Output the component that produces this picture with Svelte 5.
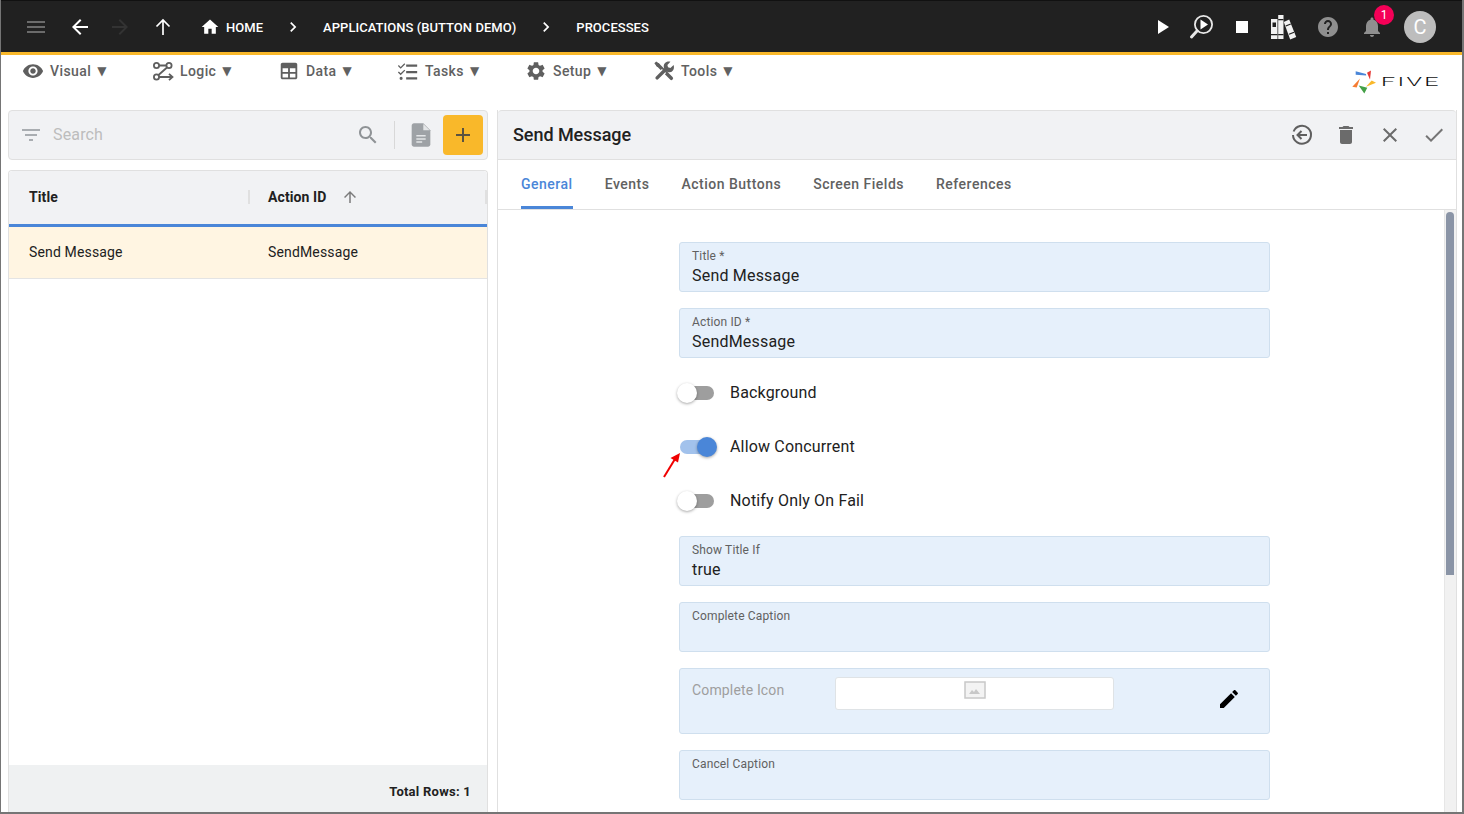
<script>
	const icons = {
		menu: "M3 18h18v-2H3v2zm0-5h18v-2H3v2zm0-7v2h18V6H3z",
		back: "M20 11H7.83l5.59-5.59L12 4l-8 8 8 8 1.41-1.41L7.83 13H20v-2z",
		forward: "M12 4l-1.41 1.41L16.17 11H4v2h12.17l-5.58 5.59L12 20l8-8z",
		up: "M4 12l1.41 1.41L11 7.83V20h2V7.83l5.58 5.59L20 12l-8-8-8 8z",
		home: "M10 20v-6h4v6h5v-8h3L12 3 2 12h3v8z",
		chevron: "M10 6L8.59 7.41 13.17 12l-4.58 4.58L10 18l6-6z",
		play: "M8 5v14l11-7z",
		stop: "M6 6h12v12H6z",
		help: "M12 2C6.48 2 2 6.48 2 12s4.48 10 10 10 10-4.48 10-10S17.52 2 12 2zm1 17h-2v-2h2v2zm2.07-7.75l-.9.92C13.45 12.9 13 13.5 13 15h-2v-.5c0-1.1.45-2.1 1.17-2.83l1.24-1.26c.37-.36.59-.86.59-1.41 0-1.1-.9-2-2-2s-2 .9-2 2H8c0-2.21 1.79-4 4-4s4 1.79 4 4c0 .88-.36 1.68-.93 2.25z",
		bell: "M12 22c1.1 0 2-.9 2-2h-4c0 1.1.89 2 2 2zm6-6v-5c0-3.07-1.64-5.64-4.5-6.32V4c0-.83-.67-1.5-1.5-1.5s-1.5.67-1.5 1.5v.68C7.63 5.36 6 7.92 6 11v5l-2 2v1h16v-1l-2-2z",
		eye: "M12 4.5C7 4.5 2.73 7.61 1 12c1.73 4.39 6 7.5 11 7.5s9.27-3.11 11-7.5c-1.73-4.39-6-7.5-11-7.5zM12 17c-2.76 0-5-2.24-5-5s2.24-5 5-5 5 2.24 5 5-2.24 5-5 5zm0-8c-1.66 0-3 1.34-3 3s1.34 3 3 3 3-1.34 3-3-1.34-3-3-3z",
		table: "M5 3h14c1.1 0 2 .9 2 2v14c0 1.1-.9 2-2 2H5c-1.1 0-2-.9-2-2V5c0-1.1.9-2 2-2zm0 6v4h6V9H5zm8 0v4h6V9h-6zm-8 6v4h6v-4H5zm8 0v4h6v-4h-6z",
		tasks: "M10 5h12v2.400H10zm0 7h12v2.400H10zm0 6.800h12v2.400H10zM2 5.500l2 2 4-4 1 1-5 5-3-3zm0 7l2 2 4-4 1 1-5 5-3-3zM4.500 18.300a1.700 1.700 0 1 1 0 3.400 1.700 1.700 0 0 1 0-3.400z",
		gear: "M19.14 12.94c.04-.3.06-.61.06-.94 0-.32-.02-.64-.07-.94l2.03-1.58c.18-.14.23-.41.12-.61l-1.92-3.32c-.12-.22-.37-.29-.59-.22l-2.39.96c-.5-.38-1.03-.7-1.62-.94l-.36-2.54c-.04-.24-.24-.41-.48-.41h-3.84c-.24 0-.43.17-.47.41l-.36 2.54c-.59.24-1.13.57-1.62.94l-2.39-.96c-.22-.08-.47 0-.59.22L2.74 8.87c-.12.21-.08.47.12.61l2.03 1.58c-.05.3-.09.63-.09.94s.02.64.07.94l-2.03 1.58c-.18.14-.23.41-.12.61l1.92 3.32c.12.22.37.29.59.22l2.39-.96c.5.38 1.03.7 1.62.94l.36 2.54c.05.24.24.41.48.41h3.84c.24 0 .44-.17.47-.41l.36-2.54c.59-.24 1.13-.56 1.62-.94l2.39.96c.22.08.47 0 .59-.22l1.92-3.32c.12-.22.07-.47-.12-.61l-2.01-1.58zM12 15.6c-1.98 0-3.6-1.62-3.6-3.6s1.62-3.6 3.6-3.6 3.6 1.62 3.6 3.6-1.62 3.6-3.6 3.6z",
		search: "M15.5 14h-.79l-.28-.27C15.41 12.59 16 11.11 16 9.5 16 5.91 13.09 3 9.5 3S3 5.91 3 9.5 5.91 16 9.5 16c1.61 0 3.09-.59 4.23-1.57l.27.28v.79l5 4.99L20.49 19l-4.99-5zm-6 0C7.01 14 5 11.99 5 9.5S7.01 5 9.5 5 14 7.01 14 9.5 11.99 14 9.5 14z",
		filter: "M10 18h4v-2h-4v2zM3 6v2h18V6H3zm3 7h12v-2H6v2z",
		add: "M19 13h-6v6h-2v-6H5v-2h6V5h2v6h6v2z",
		trash: "M6 19c0 1.1.9 2 2 2h8c1.1 0 2-.9 2-2V7H6v12zM19 4h-3.5l-1-1h-5l-1 1H5v2h14V4z",
		close: "M19 6.41L17.59 5 12 10.59 6.41 5 5 6.41 10.59 12 5 17.59 6.41 19 12 13.41 17.59 19 19 17.59 13.41 12z",
		check: "M9 16.17L4.83 12l-1.42 1.41L9 19 21 7l-1.41-1.41z",
		edit: "M3 17.25V21h3.75L17.81 9.94l-3.75-3.75L3 17.25zM20.71 7.04c.39-.39.39-1.02 0-1.41l-2.34-2.34c-.39-.39-1.02-.39-1.41 0l-1.83 1.83 3.75 3.75 1.83-1.83z"
	};

	const menus = [
		{ label: "Visual", icon: "eye" },
		{ label: "Logic", icon: "logic" },
		{ label: "Data", icon: "table" },
		{ label: "Tasks", icon: "tasks" },
		{ label: "Setup", icon: "gear" },
		{ label: "Tools", icon: "tools" }
	];

	const tabs = ["General", "Events", "Action Buttons", "Screen Fields", "References"];
</script>

{#snippet icon(name, size, color)}
	<svg width={size} height={size} viewBox="0 0 24 24" fill={color} aria-hidden="true"><path d={icons[name]} /></svg>
{/snippet}

{#snippet toggle(on)}
	<span class="toggle" class:on><span class="track"></span><span class="thumb"></span></span>
{/snippet}

<div class="frame">
	<header class="topbar">
		<button class="nav first">{@render icon("menu", 24, "#6b6b6b")}</button>
		<button class="nav gap4">{@render icon("back", 24, "#fff")}</button>
		<button class="nav">{@render icon("forward", 24, "#333")}</button>
		<button class="nav gap3">
			<svg width="24" height="24" viewBox="0 0 24 24" fill="none" stroke="#fff" stroke-width="1.700">
				<path d="M12 20V5M5.500 11.500L12 5l6.500 6.500" />
			</svg>
		</button>
		<span class="crumb home">{@render icon("home", 20, "#fff")}<span>HOME</span></span>
		<span class="sep">{@render icon("chevron", 20, "#fff")}</span>
		<span class="crumb">APPLICATIONS (BUTTON DEMO)</span>
		<span class="sep">{@render icon("chevron", 20, "#fff")}</span>
		<span class="crumb">PROCESSES</span>

		<div class="actions">
			<span class="act a-play">{@render icon("play", 24, "#fff")}</span>
			<span class="act a-run">
				<svg width="28" height="28" viewBox="0 0 28 28" fill="none">
					<circle cx="15.500" cy="11.500" r="8.600" stroke="#e8e8e8" stroke-width="1.800" />
					<path d="M12.500 6.500v10l7.500-5z" fill="#fff" />
					<path d="M9.200 17.800L3.500 24" stroke="#e8e8e8" stroke-width="3" stroke-linecap="round" />
				</svg>
			</span>
			<span class="act a-stop">{@render icon("stop", 24, "#fff")}</span>
			<span class="act a-books">
				<svg width="27" height="26" viewBox="0 0 27 26" fill="#f2f2f2">
					<path d="M1 5h6.500v20H1z" />
					<path d="M8.200 1h5.300v24H8.200z" />
					<path d="M13.800 8l5.400-2.500 7 17.500-6 2.500z" />
					<path d="M2.500 8.500h3.500v4.500H2.500zM1 20h6.500v1.200H1zM8.200 5h5.300v1.200H8.200zM8.200 20h5.300v1.200H8.200z" fill="#212121" />
					<path d="M15.500 11.500l5-2 .5 1.100-5 2zM18.800 19.700l5-2 .5 1.100-5 2z" fill="#212121" />
				</svg>
			</span>
			<span class="act a-help">{@render icon("help", 24, "#8f8f8f")}</span>
			<span class="act a-bell">{@render icon("bell", 24, "#8f8f8f")}<span class="badge">1</span></span>
			<span class="avatar">C</span>
		</div>
	</header>

	<nav class="toolbar">
		{#each menus as m}
			<span class="menu">
				{#if m.icon === "logic"}
					<svg width="22" height="22" viewBox="0 0 22 22" fill="none" stroke="#5f5f5f" stroke-width="1.800">
						<circle cx="4.500" cy="5.500" r="2.600" />
						<circle cx="17" cy="5.500" r="2.600" />
						<circle cx="4.500" cy="17" r="2.600" />
						<path d="M7 5.500h7.500M15 7.500L6.500 15M7 17h13.500M17 13.800l3.500 3.200-3.500 3.200" />
					</svg>
				{:else if m.icon === "tools"}
					<svg width="22" height="22" viewBox="0 0 24 24" fill="none">
						<path d="M5 5l15 15" stroke="#5f5f5f" stroke-width="3.800" stroke-linecap="round" />
						<path d="M1.500 3.500l2-2 4 3-.5 2.500-2.500.5z" fill="#5f5f5f" />
						<path d="M9 15l3-3" stroke="#fff" stroke-width="6.500" />
						<path d="M4.500 19.500L14 10" stroke="#5f5f5f" stroke-width="3.800" stroke-linecap="round" />
						<path d="M22.500 5.500l-3.500 3.200-2.600-.7-.7-2.600 3.300-3.500c-3.400-1-7.300 1.200-7.300 5 0 1.400.5 2.600 1.200 3.400l2.900 2.900c3.800 1.300 8.300-1.800 6.700-7.700z" fill="#5f5f5f" />
					</svg>
				{:else}
					{@render icon(m.icon, 22, "#5f5f5f")}
				{/if}
				<span class="menu-label">{m.label}</span>
				<span class="caret">▼</span>
			</span>
		{/each}
		<div class="logo">
			<svg width="24" height="24" viewBox="0 0 24 24">
				<path d="M3.700 1.200L14 4l.2 1.500-10.500-.7z" fill="#4a86d8" />
				<path d="M19 .5L15 2.800l3 6.700z" fill="#e53935" />
				<path d="M24 12.800l-4.300-2.300-5.700 6.300z" fill="#f9b82a" />
				<path d="M6.700 15.500l8.600 2.300-3 5.700z" fill="#43a047" />
				<path d="M8 8.500L.3 16.800l4.400.7z" fill="#f57c32" />
			</svg>
			<span class="logo-text">FIVE</span>
		</div>
	</nav>

	<main class="content">
		<section class="left">
			<div class="searchbar">
				<span class="filter">{@render icon("filter", 24, "#a9adb1")}</span>
				<span class="placeholder">Search</span>
				<span class="mag">{@render icon("search", 24, "#8f9396")}</span>
				<span class="divider"></span>
				<span class="doc">
					<svg width="28" height="28" viewBox="0 0 24 24">
						<path d="M6 2h8l6 6v12c0 1.100-.9 2-2 2H6c-1.100 0-2-.9-2-2V4c0-1.100.9-2 2-2z" fill="#9ea2a6" />
						<path d="M14 2.500V8h5.500z" fill="#e4e6e8" />
						<path d="M8 12h8v1.300H8zM8 14.700h8V16H8zM8 17.400h5v1.300H8z" fill="#e4e6e8" />
					</svg>
				</span>
				<button class="addbtn">{@render icon("add", 24, "#5b5340")}</button>
			</div>

			<div class="grid">
				<div class="grid-head">
					<div class="col">Title</div>
					<div class="col second">Action ID {@render icon("up", 18, "#7b7b7b")}</div>
				</div>
				<div class="grid-row">
					<div class="col">Send Message</div>
					<div class="col">SendMessage</div>
				</div>
				<div class="grid-space"></div>
				<div class="grid-foot">Total Rows: 1</div>
			</div>
		</section>

		<section class="right">
			<div class="formhead">
				<h1>Send Message</h1>
				<div class="formtools">
					<svg width="24" height="24" viewBox="0 0 24 24" fill="none" stroke="#5f5f5f" stroke-width="2">
						<path d="M3.600 8.500A9 9 0 1 1 3 12" />
						<path d="M17 12H8M11.500 8L7.500 12l4 4" />
					</svg>
					{@render icon("trash", 24, "#6b6b6b")}
					{@render icon("close", 24, "#6b6b6b")}
					{@render icon("check", 24, "#757575")}
				</div>
			</div>

			<div class="tabs">
				{#each tabs as t, i}
					<span class="tab" class:active={i === 0}>{t}</span>
				{/each}
			</div>

			<div class="formbody">
				<div class="scroller">
					<div class="form">
						<div class="field"><label>Title *</label><div class="val">Send Message</div></div>
						<div class="field"><label>Action ID *</label><div class="val">SendMessage</div></div>

						<div class="switch first-switch">{@render toggle(false)}<span class="switch-label">Background</span></div>
						<div class="switch">
							{@render toggle(true)}<span class="switch-label">Allow Concurrent</span>
							<svg class="arrow" width="20" height="28" viewBox="0 0 20 28">
								<path d="M2 26L13 8" stroke="#f00000" stroke-width="2" />
								<path d="M18 2l-9.500 5 7.500 4.500z" fill="#f00000" />
							</svg>
						</div>
						<div class="switch last-switch">{@render toggle(false)}<span class="switch-label">Notify Only On Fail</span></div>

						<div class="field"><label>Show Title If</label><div class="val">true</div></div>
						<div class="field"><label>Complete Caption</label><div class="val"></div></div>

						<div class="field iconfield">
							<span class="iconlabel">Complete Icon</span>
							<div class="iconbox">
								<svg width="22" height="18" viewBox="0 0 22 18">
									<rect x="1" y="1" width="20" height="16" fill="#f3f3f3" stroke="#c8c8c8" stroke-width="1.500" />
									<path d="M5 13l3-4 2 2 2-3 4 5z" fill="#c8c8c8" />
								</svg>
							</div>
							<span class="pencil">{@render icon("edit", 24, "#000")}</span>
						</div>

						<div class="field"><label>Cancel Caption</label><div class="val"></div></div>
					</div>
				</div>
				<div class="scrolltrack"><div class="scrollthumb"></div></div>
			</div>
		</section>
	</main>
</div>

<style>
	:global(body) {
		margin: 0;
		background: #fff;
	}
	.frame {
		width: 1464px;
		height: 814px;
		box-sizing: border-box;
		border-left: 1px solid #757575;
		border-right: 2px solid #757575;
		border-bottom: 2px solid #757575;
		font-family: Roboto, "Liberation Sans", sans-serif;
		display: flex;
		flex-direction: column;
		overflow: hidden;
		color: #212121;
	}
	svg {
		display: block;
		flex: none;
	}
	button {
		border: 0;
		background: none;
		padding: 0;
		display: flex;
		align-items: center;
		justify-content: center;
	}

	/* top bar */
	.topbar {
		height: 51px;
		margin-left: -1px;
		margin-right: -2px;
		flex: none;
		background: #212121;
		border-top: 1px solid #111;
		border-bottom: 3px solid #f9b82a;
		display: flex;
		align-items: center;
		color: #fff;
	}
	.nav {
		width: 40px;
		height: 40px;
	}
	.nav.first {
		margin-left: 16px;
	}
	.nav.gap4 {
		margin-left: 4px;
	}
	.nav.gap3 {
		margin-left: 3px;
	}
	.crumb {
		font-size: 13px;
		font-weight: 500;
		display: flex;
		align-items: center;
		white-space: nowrap;
		padding-top: 1px;
		letter-spacing: 0.04px;
	}
	.crumb.home {
		margin-left: 17px;
		gap: 6px;
	}
	.sep {
		width: 20px;
		margin: 0 20px;
	}
	.actions {
		margin-left: auto;
		display: flex;
		align-items: center;
		padding-right: 28px;
	}
	.act {
		position: relative;
		display: block;
	}
	.a-play { margin-right: 14px; }
	.a-run { margin-right: 14px; }
	.a-stop { margin-right: 16px; }
	.a-books { margin-right: 19px; }
	.a-help { margin-right: 20px; }
	.a-bell { margin-right: 20px; }
	.badge {
		position: absolute;
		top: -10px;
		left: 14px;
		width: 20px;
		height: 20px;
		border-radius: 50%;
		background: #f50057;
		color: #fff;
		font-size: 12px;
		line-height: 20px;
		text-align: center;
	}
	.avatar {
		width: 32px;
		height: 32px;
		border-radius: 50%;
		background: #bdbdbd;
		color: #fff;
		font-size: 20px;
		line-height: 32px;
		text-align: center;
	}

	/* second row */
	.toolbar {
		height: 55px;
		flex: none;
		display: grid;
		grid-template-columns: 130px 126px 119px 128px 128px auto 1fr;
		align-items: start;
		padding-left: 21px;
	}
	.menu {
		display: flex;
		align-items: center;
		height: 22px;
		margin-top: 5px;
		color: #616161;
		font-size: 14px;
		font-weight: 500;
		letter-spacing: 0.4px;
	}
	.menu-label {
		margin-left: 6px;
	}
	.caret {
		margin-left: 6px;
		font-size: 12px;
		font-family: "DejaVu Sans", sans-serif;
	}
	.logo {
		justify-self: end;
		margin-top: 15px;
		margin-right: 22px;
		display: flex;
		align-items: center;
		gap: 5px;
	}
	.logo-text {
		width: 59px;
		font-size: 12.5px;
		font-weight: 300;
		line-height: 24px;
		letter-spacing: 1.2px;
		color: #111;
		transform: scaleX(2);
		transform-origin: left center;
	}

	.content {
		flex: 1;
		min-height: 0;
		display: flex;
		padding-left: 7px;
	}

	/* left list */
	.left {
		width: 480px;
		flex: none;
		display: flex;
		flex-direction: column;
	}
	.searchbar {
		height: 50px;
		box-sizing: border-box;
		background: #f1f2f4;
		border: 1px solid #e0e0e0;
		border-radius: 4px;
		display: flex;
		align-items: center;
		flex: none;
	}
	.filter {
		margin-left: 10px;
	}
	.placeholder {
		margin-left: 10px;
		padding-bottom: 2px;
		font-size: 16px;
		letter-spacing: 0.15px;
		color: #bdbdbd;
	}
	.mag {
		margin-left: auto;
	}
	.divider {
		width: 1px;
		height: 28px;
		background: #d8d8d8;
		margin: 0 12px 0 14px;
	}
	.doc {
		margin-right: 8px;
	}
	.addbtn {
		width: 40px;
		height: 40px;
		border-radius: 4px;
		background: #f9b82a;
		margin-right: 4px;
	}
	.grid {
		margin-top: 10px;
		flex: 1;
		min-height: 0;
		display: flex;
		flex-direction: column;
		border: 1px solid #e0e0e0;
		border-bottom: 0;
		border-radius: 4px 4px 0 0;
	}
	.grid-head {
		height: 51px;
		padding-bottom: 2px;
		flex: none;
		background: #f1f2f4;
		border-bottom: 3px solid #4a86d8;
		display: flex;
		align-items: center;
		font-size: 14px;
		font-weight: 700;
		letter-spacing: 0.1px;
		border-radius: 4px 4px 0 0;
	}
	.col {
		width: 239px;
		box-sizing: border-box;
		padding-left: 20px;
		white-space: nowrap;
	}
	.grid-head .second {
		display: flex;
		align-items: center;
		gap: 15px;
		border-left: 2px solid #e0e0e0;
		border-right: 2px solid #e0e0e0;
		height: 14px;
		padding-left: 18px;
	}
	.grid-row {
		height: 49px;
		padding-bottom: 2px;
		flex: none;
		background: #fff5e2;
		border-bottom: 1px solid #e4e4e4;
		display: flex;
		align-items: center;
		font-size: 14px;
		letter-spacing: 0.15px;
	}
	.grid-space {
		flex: 1;
	}
	.grid-foot {
		height: 47px;
		flex: none;
		background: #eff1f2;
		font-size: 13px;
		font-weight: 700;
		letter-spacing: 0.25px;
		text-align: right;
		padding-right: 16px;
		line-height: 54px;
	}

	/* right form */
	.right {
		width: 960px;
		flex: none;
		margin-left: 9px;
		display: flex;
		flex-direction: column;
		border-left: 1px solid #e0e0e0;
		border-right: 1px solid #e0e0e0;
		box-sizing: border-box;
	}
	.formhead {
		height: 50px;
		flex: none;
		box-sizing: border-box;
		background: #f1f2f4;
		border: 1px solid #e0e0e0;
		border-left: 0;
		border-right: 0;
		border-radius: 4px 4px 0 0;
		display: flex;
		align-items: center;
		padding: 0 10px 0 15px;
	}
	h1 {
		margin: 0 0 2px;
		font-size: 18px;
		font-weight: 500;
		letter-spacing: -0.05px;
	}
	.formtools {
		margin-left: auto;
		display: flex;
		gap: 20px;
	}
	.tabs {
		height: 50px;
		flex: none;
		box-sizing: border-box;
		border-bottom: 1px solid #e0e0e0;
		display: flex;
		padding-left: 23px;
		gap: 32px;
	}
	.tab {
		font-size: 14px;
		font-weight: 500;
		letter-spacing: 0.5px;
		color: #616161;
		line-height: 48px;
		height: 49px;
		box-sizing: border-box;
	}
	.tab.active {
		color: #4a86d8;
		border-bottom: 3px solid #4a86d8;
	}
	.formbody {
		flex: 1;
		min-height: 0;
		display: flex;
	}
	.scroller {
		flex: 1;
		min-width: 0;
		overflow: hidden;
	}
	.form {
		width: 591px;
		margin: 32px 0 0 181px;
		display: flex;
		flex-direction: column;
	}
	.field {
		height: 50px;
		flex: none;
		box-sizing: border-box;
		background: #e6f0fb;
		border: 1px solid #cfdfee;
		border-radius: 3px;
		padding: 6px 12px 0;
		margin-bottom: 16px;
	}
	label {
		display: block;
		font-size: 12px;
		line-height: 14px;
		letter-spacing: 0.15px;
		color: #616161;
	}
	.val {
		font-size: 16px;
		line-height: 24px;
		margin-top: 1px;
		letter-spacing: 0.2px;
	}
	.switch {
		position: relative;
		display: flex;
		align-items: center;
		height: 54px;
		font-size: 16px;
		letter-spacing: 0.17px;
	}
	.switch-label {
		padding-bottom: 2px;
	}
	.first-switch {
		margin-top: -8px;
	}
	.last-switch {
		margin-bottom: 8px;
	}
	.toggle {
		position: relative;
		display: block;
		width: 36px;
		height: 20px;
		margin-right: 15px;
	}
	.track {
		position: absolute;
		left: 1px;
		right: 1px;
		top: 3px;
		height: 14px;
		border-radius: 7px;
		background: #9e9e9e;
	}
	.thumb {
		position: absolute;
		left: -2px;
		top: 0;
		width: 20px;
		height: 20px;
		border-radius: 50%;
		background: #fff;
		box-shadow: 0 1px 3px rgba(0, 0, 0, 0.35);
	}
	.toggle.on .track {
		background: #a2c2ec;
	}
	.toggle.on .thumb {
		left: 18px;
		background: #4a86d8;
	}
	.arrow {
		position: absolute;
		left: -17px;
		top: 31px;
	}
	.iconfield {
		height: 66px;
		display: flex;
		padding: 8px 12px 0;
		align-items: flex-start;
	}
	.iconlabel {
		width: 143px;
		font-size: 14px;
		letter-spacing: 0.15px;
		line-height: 26px;
		color: #9e9e9e;
	}
	.iconbox {
		width: 279px;
		height: 33px;
		box-sizing: border-box;
		background: #fff;
		border: 1px solid #dfe3e6;
		border-radius: 3px;
		display: flex;
		justify-content: center;
		padding-top: 3px;
	}
	.pencil {
		margin: 10px 0 0 103px;
	}
	.scrolltrack {
		width: 12px;
		flex: none;
		background: #f1f1f1;
		border-left: 1px solid #e6e6e6;
		box-sizing: border-box;
		padding: 2px 2px 0 1px;
	}
	.scrollthumb {
		width: 8px;
		height: 363px;
		border-radius: 4px 4px 0 0;
		background: #8a94a6;
	}
</style>
